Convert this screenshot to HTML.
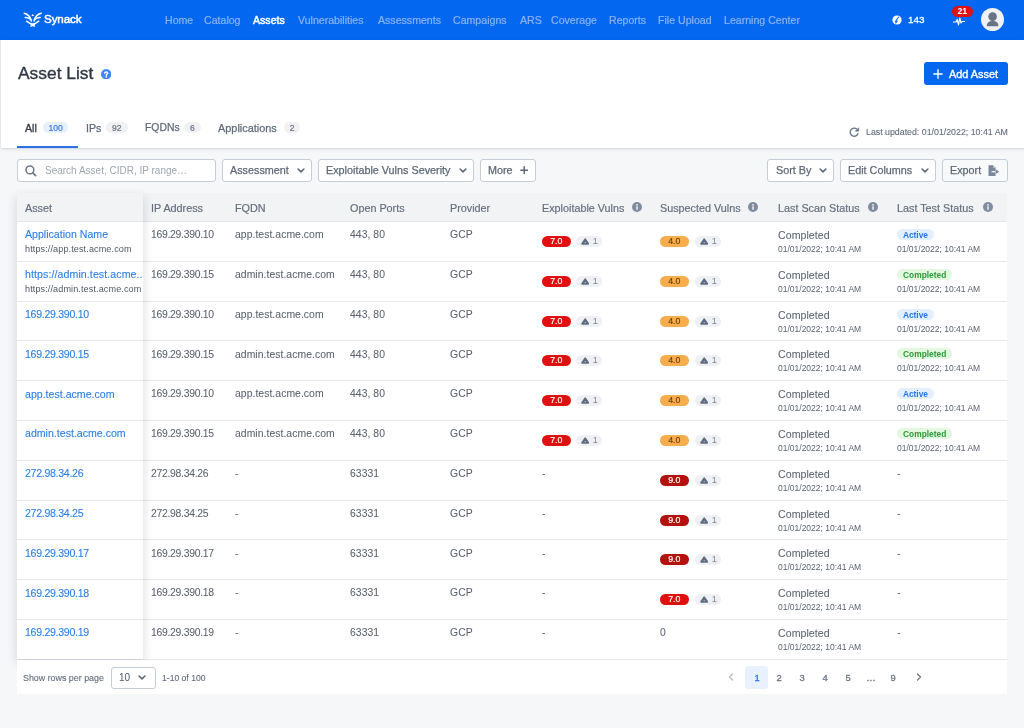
<!DOCTYPE html>
<html><head><meta charset="utf-8"><style>
*{margin:0;padding:0;box-sizing:border-box}
html,body{width:1024px;height:728px;overflow:hidden;background:#f6f7f9;font-family:"Liberation Sans",sans-serif}
.abs{position:absolute}
svg{display:block}
.t{position:absolute;line-height:1;white-space:nowrap;will-change:transform}
.pill,.gpill,.st,.bdg{will-change:transform}
#nav{position:absolute;left:0;top:0;width:1024px;height:40px;background:#0467f0}
.nl{color:#8ab4f7;font-size:10.6px;-webkit-text-stroke:0.2px #8ab4f7}
.nl.on{color:#fff;-webkit-text-stroke:0.45px #fff}
#hdr{position:absolute;left:1px;top:40px;width:1023px;height:109.2px;background:#fff;border-bottom:1px solid #dadde2;box-shadow:0 1px 3px rgba(30,40,60,0.08)}
.pill{position:absolute;height:11.4px;border-radius:6px;font-size:8.8px;line-height:11.8px;text-align:center;-webkit-text-stroke:0.15px currentColor}
.gpill{position:absolute;height:11.4px;width:26px;border-radius:6px;background:#eef0f3;font-size:8.4px;line-height:11.6px;color:#7f8c9e}
.gpill svg{position:absolute;left:4.5px;top:2.3px}
.gpill span{position:absolute;left:17px;top:0;-webkit-text-stroke:0.15px currentColor}
.btn{position:absolute;top:159.3px;height:22.4px;border:1px solid #c6ccd5;border-radius:3px;background:#fff}
.bt{color:#5d6877;font-size:10.8px;-webkit-text-stroke:0.25px #5d6877}
.th{color:#626e7e;font-size:10.8px;-webkit-text-stroke:0.18px #626e7e}
.cell{color:#59626e;font-size:10.4px;letter-spacing:0.05px;-webkit-text-stroke:0.05px #59626e}
.link{color:#2a7de8;font-size:10.6px;-webkit-text-stroke:0.1px #2a7de8}
.sub{color:#4f5865;font-size:9.1px;letter-spacing:0.1px}
.date{color:#5a6270;font-size:8.5px}
.st{position:absolute;height:11px;border-radius:6px;font-size:8.4px;line-height:12.6px;font-weight:700;text-align:center}
.pg{color:#6b7686;font-size:9.4px;-webkit-text-stroke:0.3px currentColor}
.bdg{position:absolute;top:122.4px;height:11px;border-radius:5.5px;background:#f0f1f3;color:#6a7483;font-size:8.6px;line-height:13px;text-align:center;-webkit-text-stroke:0.2px currentColor}
</style></head><body>

<div id="nav">
<svg class="abs" style="left:22px;top:10px" width="22" height="19" viewBox="0 0 22 19">
<g fill="none" stroke="#fff" stroke-linecap="round" stroke-width="1.5">
<path d="M2.2 3.2 Q7.8 4.6 9.4 11"/><path d="M3.2 7.4 Q6.8 7.2 8.7 9.6"/><path d="M4.6 11.2 Q7.5 13.6 10.7 14.3"/>
<path d="M19.2 3.2 Q13.6 4.6 12 11"/><path d="M18.2 7.4 Q14.6 7.2 12.7 9.6"/><path d="M16.8 11.2 Q13.9 13.6 10.7 14.3"/>
</g>
<path d="M10.7 3.9 L12 5.9 L9.4 5.9 Z" fill="#fff"/>
<path d="M7.8 13.6 L10.7 14.6 L13.6 13.6 L12.6 15.4 L13.4 17.1 L10.7 16.2 L8 17.1 L8.8 15.4 Z" fill="#fff"/>
</svg>
<div class="t " style="left:44.00px;top:13.44px;color:#fff;font-size:11.6px;letter-spacing:-0.1px;-webkit-text-stroke:0.5px #fff">Synack</div>
<div class="t nl" style="left:165.40px;top:14.99px;">Home</div>
<div class="t nl" style="left:204.40px;top:14.99px;">Catalog</div>
<div class="t nl on" style="left:253.40px;top:14.99px;">Assets</div>
<div class="t nl" style="left:298.40px;top:14.99px;">Vulnerabilities</div>
<div class="t nl" style="left:377.90px;top:14.99px;">Assessments</div>
<div class="t nl" style="left:453.40px;top:14.99px;">Campaigns</div>
<div class="t nl" style="left:519.90px;top:14.99px;">ARS</div>
<div class="t nl" style="left:551.40px;top:14.99px;">Coverage</div>
<div class="t nl" style="left:609.40px;top:14.99px;">Reports</div>
<div class="t nl" style="left:658.40px;top:14.99px;">File Upload</div>
<div class="t nl" style="left:724.40px;top:14.99px;">Learning Center</div>
<svg class="abs" style="left:891.8px;top:15px" width="10" height="10" viewBox="0 0 10 10"><circle cx="5" cy="5" r="4.6" fill="#fff"/><path d="M6.8 1.8 L3.6 6.2 L5 6.2 L3.4 8.4" fill="none" stroke="#0467f0" stroke-width="1.1"/></svg>
<div class="t " style="left:907.60px;top:15.38px;color:#fff;font-size:9.9px;-webkit-text-stroke:0.3px #fff">143</div>
<svg class="abs" style="left:952.5px;top:16.5px" width="12" height="9" viewBox="0 0 12 9"><path d="M0.5 5 L3 5 L4.2 2.5 L5.5 8 L6.8 1 L8 6 L9 4.5 L11.5 4.5" fill="none" stroke="#fff" stroke-width="1.2" stroke-linejoin="round" stroke-linecap="round"/></svg>
<div class="abs" style="left:952px;top:6px;width:20.8px;height:10.8px;border-radius:5.4px;background:#e0110f;color:#fff;font-size:8.2px;font-weight:700;line-height:11.6px;text-align:center">21</div>
<svg class="abs" style="left:981px;top:8.2px" width="23" height="23" viewBox="0 0 23 23"><circle cx="11.5" cy="11.5" r="11.5" fill="#f0f1f3"/><circle cx="11.6" cy="8.6" r="4.3" fill="#687485"/><path d="M5.8 18.2 C5.8 14.5 7.8 13 11.6 13 C15.4 13 17.4 14.5 17.4 18.2 Z" fill="#687485"/></svg>
</div>
<div id="hdr"></div>
<div class="abs" style="left:0;top:40px;width:1px;height:108px;background:#e3e6ea"></div>
<div class="t " style="left:18.00px;top:64.71px;color:#2f3743;font-size:17.4px;-webkit-text-stroke:0.35px #2f3743">Asset List</div>
<svg class="abs" style="left:100.8px;top:69px" width="10.4" height="10.4" viewBox="0 0 10 10"><circle cx="5" cy="5" r="5" fill="#3e87f3"/><path d="M3.5 4 C3.5 2.5 6.5 2.5 6.5 3.9 C6.5 4.9 5.1 5 5.1 6" fill="none" stroke="#fff" stroke-width="1.35" stroke-linecap="round"/><circle cx="5.1" cy="7.6" r="0.75" fill="#fff"/></svg>
<div class="abs" style="left:924px;top:62.2px;width:83.6px;height:23px;border-radius:3px;background:#0467f0"></div>
<svg class="abs" style="left:933px;top:69.2px" width="10" height="10" viewBox="0 0 10 10"><path d="M5 0.8 V9.2 M0.8 5 H9.2" stroke="#fff" stroke-width="1.4" stroke-linecap="round"/></svg>
<div class="t " style="left:949.40px;top:68.53px;color:#fff;font-size:10.9px;-webkit-text-stroke:0.35px #fff">Add Asset</div>
<div class="t " style="left:25.00px;top:122.99px;color:#333b46;font-size:10.6px;-webkit-text-stroke:0.35px #333b46">All</div>
<div class="bdg" style="left:43.3px;width:25.4px;background:#e6f0fd;color:#3a7be0">100</div>
<div class="t " style="left:86.00px;top:122.99px;color:#5f6b7b;font-size:10.6px;-webkit-text-stroke:0.25px #5f6b7b">IPs</div>
<div class="bdg" style="left:106.4px;width:21.6px">92</div>
<div class="t " style="left:145.30px;top:123.16px;color:#5f6b7b;font-size:10.4px;-webkit-text-stroke:0.25px #5f6b7b">FQDNs</div>
<div class="bdg" style="left:183.8px;width:16.6px">6</div>
<div class="t " style="left:217.60px;top:122.73px;color:#5f6b7b;font-size:10.9px;-webkit-text-stroke:0.25px #5f6b7b">Applications</div>
<div class="bdg" style="left:283.7px;width:16.4px">2</div>
<div class="abs" style="left:17px;top:146px;width:60.5px;height:2.2px;background:#2c72e6"></div>
<svg class="abs" style="left:849px;top:126.6px" width="10.6" height="10.6" viewBox="0 0 10 10"><path d="M8.6 5.9 A3.8 3.8 0 1 1 7.6 2.2" fill="none" stroke="#66738a" stroke-width="1.2"/><path d="M9.2 0.7 V3.9 H6 Z" fill="#66738a" stroke="#66738a" stroke-width="0.5" stroke-linejoin="round"/></svg>
<div class="t " style="left:866.40px;top:127.82px;color:#5f6b7b;font-size:8.8px;-webkit-text-stroke:0.1px #5f6b7b">Last updated: 01/01/2022; 10:41 AM</div>
<div class="btn" style="left:17px;width:199px"></div>
<svg class="abs" style="left:24.8px;top:164.8px" width="12" height="12" viewBox="0 0 12 12"><circle cx="4.9" cy="4.9" r="3.9" fill="none" stroke="#6b778a" stroke-width="1.5"/><path d="M7.8 7.8 L10.6 10.6" stroke="#6b778a" stroke-width="1.7" stroke-linecap="round"/></svg>
<div class="t " style="left:45.20px;top:166.30px;color:#9ea6b1;font-size:10px">Search Asset, CIDR, IP range…</div>
<div class="btn" style="left:222px;width:89.7px;background:#fff"></div>
<div class="t bt" style="left:230.00px;top:165.42px;">Assessment</div>
<div class="abs" style="left:297px;top:168.3px"><svg width="8" height="5" viewBox="0 0 8 5"><path d="M1.1 1 L4 3.9 L6.9 1" fill="none" stroke="#5d6878" stroke-width="1.6" stroke-linecap="round" stroke-linejoin="round"/></svg></div>
<div class="btn" style="left:318px;width:156px;background:#fff"></div>
<div class="t bt" style="left:326.00px;top:165.42px;">Exploitable Vulns Severity</div>
<div class="abs" style="left:459px;top:168.3px"><svg width="8" height="5" viewBox="0 0 8 5"><path d="M1.1 1 L4 3.9 L6.9 1" fill="none" stroke="#5d6878" stroke-width="1.6" stroke-linecap="round" stroke-linejoin="round"/></svg></div>
<div class="btn" style="left:480px;width:55.6px;background:#fff"></div>
<div class="t bt" style="left:487.80px;top:165.42px;">More</div>
<div class="btn" style="left:767.2px;width:66.8px;background:#fff"></div>
<div class="t bt" style="left:775.50px;top:165.42px;">Sort By</div>
<div class="abs" style="left:819px;top:168.3px"><svg width="8" height="5" viewBox="0 0 8 5"><path d="M1.1 1 L4 3.9 L6.9 1" fill="none" stroke="#5d6878" stroke-width="1.6" stroke-linecap="round" stroke-linejoin="round"/></svg></div>
<div class="btn" style="left:840px;width:95.6px;background:#fff"></div>
<div class="t bt" style="left:848.20px;top:165.42px;">Edit Columns</div>
<div class="abs" style="left:921px;top:168.3px"><svg width="8" height="5" viewBox="0 0 8 5"><path d="M1.1 1 L4 3.9 L6.9 1" fill="none" stroke="#5d6878" stroke-width="1.6" stroke-linecap="round" stroke-linejoin="round"/></svg></div>
<div class="btn" style="left:941.5px;width:66px;background:#f8f9fa"></div>
<div class="t bt" style="left:949.50px;top:165.42px;">Export</div>
<svg class="abs" style="left:520px;top:166.3px" width="8.4" height="8.4" viewBox="0 0 8.4 8.4"><path d="M4.2 0.8 V7.6 M0.8 4.2 H7.6" stroke="#5d6878" stroke-width="1.5" stroke-linecap="round"/></svg>
<svg class="abs" style="left:987.5px;top:164.8px" width="12" height="11.5" viewBox="0 0 12 11.5"><path d="M0.5 0.8 Q0.5 0.2 1.1 0.2 L5.2 0.2 L7.6 2.7 L7.6 10.7 Q7.6 11.3 7 11.3 L1.1 11.3 Q0.5 11.3 0.5 10.7 Z" fill="#7b889b"/><path d="M5.2 0.2 L5.2 2.7 L7.6 2.7" fill="#c9d0da"/><rect x="3.6" y="6.1" width="5" height="1.2" fill="#f8f9fa"/><path d="M8 4.6 L11.3 6.7 L8 8.8 Z" fill="#7b889b"/><rect x="7.4" y="6.1" width="1.6" height="1.2" fill="#7b889b"/></svg>
<div class="abs" style="left:17px;top:193px;width:990px;height:501.2px;background:#fff"></div>
<div class="abs" style="left:17px;top:193px;width:990px;height:28.9px;background:#f2f3f5;border-bottom:1px solid #e3e6ea"></div>
<div class="abs" style="left:17px;top:260.70px;width:990px;height:1px;background:#e6e8eb"></div>
<div class="abs" style="left:17px;top:300.50px;width:990px;height:1px;background:#e6e8eb"></div>
<div class="abs" style="left:17px;top:340.30px;width:990px;height:1px;background:#e6e8eb"></div>
<div class="abs" style="left:17px;top:380.10px;width:990px;height:1px;background:#e6e8eb"></div>
<div class="abs" style="left:17px;top:419.90px;width:990px;height:1px;background:#e6e8eb"></div>
<div class="abs" style="left:17px;top:459.70px;width:990px;height:1px;background:#e6e8eb"></div>
<div class="abs" style="left:17px;top:499.50px;width:990px;height:1px;background:#e6e8eb"></div>
<div class="abs" style="left:17px;top:539.30px;width:990px;height:1px;background:#e6e8eb"></div>
<div class="abs" style="left:17px;top:579.10px;width:990px;height:1px;background:#e6e8eb"></div>
<div class="abs" style="left:17px;top:618.90px;width:990px;height:1px;background:#e6e8eb"></div>
<div class="abs" style="left:17px;top:658.70px;width:990px;height:1px;background:#e6e8eb"></div>
<div class="abs" style="left:17px;top:659.00px;width:910px;height:1.4px;background:#e6e9ec"></div>
<div class="abs" style="left:17px;top:193px;width:126px;height:466.2px;box-shadow:0 4px 10px rgba(20,30,50,0.17)"></div>
<div class="abs" style="left:17px;top:659.6px;width:990px;height:34.6px;background:#fff"></div>
<div class="abs" style="left:17px;top:193px;width:126px;height:466.2px;background:#fff"></div>
<div class="abs" style="left:17px;top:193px;width:126px;height:28.9px;background:#f2f3f5;border-bottom:1px solid #e3e6ea"></div>
<div class="abs" style="left:17px;top:260.70px;width:126px;height:1px;background:#e6e8eb"></div>
<div class="abs" style="left:17px;top:300.50px;width:126px;height:1px;background:#e6e8eb"></div>
<div class="abs" style="left:17px;top:340.30px;width:126px;height:1px;background:#e6e8eb"></div>
<div class="abs" style="left:17px;top:380.10px;width:126px;height:1px;background:#e6e8eb"></div>
<div class="abs" style="left:17px;top:419.90px;width:126px;height:1px;background:#e6e8eb"></div>
<div class="abs" style="left:17px;top:459.70px;width:126px;height:1px;background:#e6e8eb"></div>
<div class="abs" style="left:17px;top:499.50px;width:126px;height:1px;background:#e6e8eb"></div>
<div class="abs" style="left:17px;top:539.30px;width:126px;height:1px;background:#e6e8eb"></div>
<div class="abs" style="left:17px;top:579.10px;width:126px;height:1px;background:#e6e8eb"></div>
<div class="abs" style="left:17px;top:618.90px;width:126px;height:1px;background:#e6e8eb"></div>
<div class="t th" style="left:24.90px;top:202.92px;">Asset</div>
<div class="t th" style="left:151.10px;top:202.92px;">IP Address</div>
<div class="t th" style="left:235.10px;top:202.92px;">FQDN</div>
<div class="t th" style="left:349.50px;top:202.92px;">Open Ports</div>
<div class="t th" style="left:449.70px;top:202.92px;">Provider</div>
<div class="t th" style="left:541.50px;top:202.92px;">Exploitable Vulns</div>
<div class="abs" style="left:631.60px;top:202.4px"><svg width="10" height="10" viewBox="0 0 10 10"><circle cx="5" cy="5" r="5" fill="#7f8ca0"/><circle cx="5" cy="2.9" r="0.8" fill="#fff"/><rect x="4.35" y="4.3" width="1.3" height="3.5" rx="0.3" fill="#fff"/></svg></div>
<div class="t th" style="left:659.70px;top:202.92px;">Suspected Vulns</div>
<div class="abs" style="left:748.30px;top:202.4px"><svg width="10" height="10" viewBox="0 0 10 10"><circle cx="5" cy="5" r="5" fill="#7f8ca0"/><circle cx="5" cy="2.9" r="0.8" fill="#fff"/><rect x="4.35" y="4.3" width="1.3" height="3.5" rx="0.3" fill="#fff"/></svg></div>
<div class="t th" style="left:778.10px;top:202.92px;">Last Scan Status</div>
<div class="abs" style="left:868.30px;top:202.4px"><svg width="10" height="10" viewBox="0 0 10 10"><circle cx="5" cy="5" r="5" fill="#7f8ca0"/><circle cx="5" cy="2.9" r="0.8" fill="#fff"/><rect x="4.35" y="4.3" width="1.3" height="3.5" rx="0.3" fill="#fff"/></svg></div>
<div class="t th" style="left:896.80px;top:202.92px;">Last Test Status</div>
<div class="abs" style="left:982.70px;top:202.4px"><svg width="10" height="10" viewBox="0 0 10 10"><circle cx="5" cy="5" r="5" fill="#7f8ca0"/><circle cx="5" cy="2.9" r="0.8" fill="#fff"/><rect x="4.35" y="4.3" width="1.3" height="3.5" rx="0.3" fill="#fff"/></svg></div>
<div class="t link" style="left:24.90px;top:229.49px;">Application Name</div>
<div class="t sub" style="left:25.00px;top:245.06px;">https://app.test.acme.com</div>
<div class="t cell" style="left:151.10px;top:230.16px;letter-spacing:-0.28px">169.29.390.10</div>
<div class="t cell" style="left:235.10px;top:230.16px;">app.test.acme.com</div>
<div class="t cell" style="left:349.50px;top:230.16px;">443, 80</div>
<div class="t cell" style="left:449.70px;top:230.16px;">GCP</div>
<div class="pill" style="left:541.70px;top:236.00px;width:28.6px;background:#e01010;color:#fff">7.0</div><div class="gpill" style="left:576.00px;top:236.00px"><svg width="8.4" height="7" viewBox="0 0 8.4 7"><path d="M4.2 1.2 L7.3 5.8 L1.1 5.8 Z" fill="#5d6b80" stroke="#5d6b80" stroke-width="1.7" stroke-linejoin="round"/><rect x="3.75" y="4.2" width="0.9" height="1" fill="#eef0f3"/></svg><span>1</span></div>
<div class="pill" style="left:660.40px;top:236.00px;width:28.6px;background:#f7ad4c;color:#6b4210">4.0</div><div class="gpill" style="left:694.70px;top:236.00px"><svg width="8.4" height="7" viewBox="0 0 8.4 7"><path d="M4.2 1.2 L7.3 5.8 L1.1 5.8 Z" fill="#5d6b80" stroke="#5d6b80" stroke-width="1.7" stroke-linejoin="round"/><rect x="3.75" y="4.2" width="0.9" height="1" fill="#eef0f3"/></svg><span>1</span></div>
<div class="t cell" style="left:778.10px;top:229.99px;font-size:10.6px">Completed</div>
<div class="t date" style="left:778.30px;top:244.98px;">01/01/2022; 10:41 AM</div>
<div class="st" style="left:897.3px;top:229.00px;width:36.9px;background:#e4effd;color:#2a74e0">Active</div>
<div class="t date" style="left:897.00px;top:244.98px;">01/01/2022; 10:41 AM</div>
<div class="t link" style="left:24.90px;top:269.29px;letter-spacing:0.09px">https://admin.test.acme..</div>
<div class="t sub" style="left:25.00px;top:284.87px;">https://admin.test.acme.com</div>
<div class="t cell" style="left:151.10px;top:269.96px;letter-spacing:-0.28px">169.29.390.15</div>
<div class="t cell" style="left:235.10px;top:269.96px;">admin.test.acme.com</div>
<div class="t cell" style="left:349.50px;top:269.96px;">443, 80</div>
<div class="t cell" style="left:449.70px;top:269.96px;">GCP</div>
<div class="pill" style="left:541.70px;top:275.80px;width:28.6px;background:#e01010;color:#fff">7.0</div><div class="gpill" style="left:576.00px;top:275.80px"><svg width="8.4" height="7" viewBox="0 0 8.4 7"><path d="M4.2 1.2 L7.3 5.8 L1.1 5.8 Z" fill="#5d6b80" stroke="#5d6b80" stroke-width="1.7" stroke-linejoin="round"/><rect x="3.75" y="4.2" width="0.9" height="1" fill="#eef0f3"/></svg><span>1</span></div>
<div class="pill" style="left:660.40px;top:275.80px;width:28.6px;background:#f7ad4c;color:#6b4210">4.0</div><div class="gpill" style="left:694.70px;top:275.80px"><svg width="8.4" height="7" viewBox="0 0 8.4 7"><path d="M4.2 1.2 L7.3 5.8 L1.1 5.8 Z" fill="#5d6b80" stroke="#5d6b80" stroke-width="1.7" stroke-linejoin="round"/><rect x="3.75" y="4.2" width="0.9" height="1" fill="#eef0f3"/></svg><span>1</span></div>
<div class="t cell" style="left:778.10px;top:269.79px;font-size:10.6px">Completed</div>
<div class="t date" style="left:778.30px;top:284.77px;">01/01/2022; 10:41 AM</div>
<div class="st" style="left:897.3px;top:268.80px;width:55.4px;background:#e3f8df;color:#2f9a3c">Completed</div>
<div class="t date" style="left:897.00px;top:284.77px;">01/01/2022; 10:41 AM</div>
<div class="t link" style="left:24.90px;top:309.09px;letter-spacing:-0.3px">169.29.390.10</div>
<div class="t cell" style="left:151.10px;top:309.76px;letter-spacing:-0.28px">169.29.390.10</div>
<div class="t cell" style="left:235.10px;top:309.76px;">app.test.acme.com</div>
<div class="t cell" style="left:349.50px;top:309.76px;">443, 80</div>
<div class="t cell" style="left:449.70px;top:309.76px;">GCP</div>
<div class="pill" style="left:541.70px;top:315.60px;width:28.6px;background:#e01010;color:#fff">7.0</div><div class="gpill" style="left:576.00px;top:315.60px"><svg width="8.4" height="7" viewBox="0 0 8.4 7"><path d="M4.2 1.2 L7.3 5.8 L1.1 5.8 Z" fill="#5d6b80" stroke="#5d6b80" stroke-width="1.7" stroke-linejoin="round"/><rect x="3.75" y="4.2" width="0.9" height="1" fill="#eef0f3"/></svg><span>1</span></div>
<div class="pill" style="left:660.40px;top:315.60px;width:28.6px;background:#f7ad4c;color:#6b4210">4.0</div><div class="gpill" style="left:694.70px;top:315.60px"><svg width="8.4" height="7" viewBox="0 0 8.4 7"><path d="M4.2 1.2 L7.3 5.8 L1.1 5.8 Z" fill="#5d6b80" stroke="#5d6b80" stroke-width="1.7" stroke-linejoin="round"/><rect x="3.75" y="4.2" width="0.9" height="1" fill="#eef0f3"/></svg><span>1</span></div>
<div class="t cell" style="left:778.10px;top:309.59px;font-size:10.6px">Completed</div>
<div class="t date" style="left:778.30px;top:324.57px;">01/01/2022; 10:41 AM</div>
<div class="st" style="left:897.3px;top:308.60px;width:36.9px;background:#e4effd;color:#2a74e0">Active</div>
<div class="t date" style="left:897.00px;top:324.57px;">01/01/2022; 10:41 AM</div>
<div class="t link" style="left:24.90px;top:348.89px;letter-spacing:-0.3px">169.29.390.15</div>
<div class="t cell" style="left:151.10px;top:349.56px;letter-spacing:-0.28px">169.29.390.15</div>
<div class="t cell" style="left:235.10px;top:349.56px;">admin.test.acme.com</div>
<div class="t cell" style="left:349.50px;top:349.56px;">443, 80</div>
<div class="t cell" style="left:449.70px;top:349.56px;">GCP</div>
<div class="pill" style="left:541.70px;top:355.40px;width:28.6px;background:#e01010;color:#fff">7.0</div><div class="gpill" style="left:576.00px;top:355.40px"><svg width="8.4" height="7" viewBox="0 0 8.4 7"><path d="M4.2 1.2 L7.3 5.8 L1.1 5.8 Z" fill="#5d6b80" stroke="#5d6b80" stroke-width="1.7" stroke-linejoin="round"/><rect x="3.75" y="4.2" width="0.9" height="1" fill="#eef0f3"/></svg><span>1</span></div>
<div class="pill" style="left:660.40px;top:355.40px;width:28.6px;background:#f7ad4c;color:#6b4210">4.0</div><div class="gpill" style="left:694.70px;top:355.40px"><svg width="8.4" height="7" viewBox="0 0 8.4 7"><path d="M4.2 1.2 L7.3 5.8 L1.1 5.8 Z" fill="#5d6b80" stroke="#5d6b80" stroke-width="1.7" stroke-linejoin="round"/><rect x="3.75" y="4.2" width="0.9" height="1" fill="#eef0f3"/></svg><span>1</span></div>
<div class="t cell" style="left:778.10px;top:349.39px;font-size:10.6px">Completed</div>
<div class="t date" style="left:778.30px;top:364.38px;">01/01/2022; 10:41 AM</div>
<div class="st" style="left:897.3px;top:348.40px;width:55.4px;background:#e3f8df;color:#2f9a3c">Completed</div>
<div class="t date" style="left:897.00px;top:364.38px;">01/01/2022; 10:41 AM</div>
<div class="t link" style="left:24.90px;top:388.69px;">app.test.acme.com</div>
<div class="t cell" style="left:151.10px;top:389.36px;letter-spacing:-0.28px">169.29.390.10</div>
<div class="t cell" style="left:235.10px;top:389.36px;">app.test.acme.com</div>
<div class="t cell" style="left:349.50px;top:389.36px;">443, 80</div>
<div class="t cell" style="left:449.70px;top:389.36px;">GCP</div>
<div class="pill" style="left:541.70px;top:395.20px;width:28.6px;background:#e01010;color:#fff">7.0</div><div class="gpill" style="left:576.00px;top:395.20px"><svg width="8.4" height="7" viewBox="0 0 8.4 7"><path d="M4.2 1.2 L7.3 5.8 L1.1 5.8 Z" fill="#5d6b80" stroke="#5d6b80" stroke-width="1.7" stroke-linejoin="round"/><rect x="3.75" y="4.2" width="0.9" height="1" fill="#eef0f3"/></svg><span>1</span></div>
<div class="pill" style="left:660.40px;top:395.20px;width:28.6px;background:#f7ad4c;color:#6b4210">4.0</div><div class="gpill" style="left:694.70px;top:395.20px"><svg width="8.4" height="7" viewBox="0 0 8.4 7"><path d="M4.2 1.2 L7.3 5.8 L1.1 5.8 Z" fill="#5d6b80" stroke="#5d6b80" stroke-width="1.7" stroke-linejoin="round"/><rect x="3.75" y="4.2" width="0.9" height="1" fill="#eef0f3"/></svg><span>1</span></div>
<div class="t cell" style="left:778.10px;top:389.19px;font-size:10.6px">Completed</div>
<div class="t date" style="left:778.30px;top:404.18px;">01/01/2022; 10:41 AM</div>
<div class="st" style="left:897.3px;top:388.20px;width:36.9px;background:#e4effd;color:#2a74e0">Active</div>
<div class="t date" style="left:897.00px;top:404.18px;">01/01/2022; 10:41 AM</div>
<div class="t link" style="left:24.90px;top:428.49px;">admin.test.acme.com</div>
<div class="t cell" style="left:151.10px;top:429.16px;letter-spacing:-0.28px">169.29.390.15</div>
<div class="t cell" style="left:235.10px;top:429.16px;">admin.test.acme.com</div>
<div class="t cell" style="left:349.50px;top:429.16px;">443, 80</div>
<div class="t cell" style="left:449.70px;top:429.16px;">GCP</div>
<div class="pill" style="left:541.70px;top:435.00px;width:28.6px;background:#e01010;color:#fff">7.0</div><div class="gpill" style="left:576.00px;top:435.00px"><svg width="8.4" height="7" viewBox="0 0 8.4 7"><path d="M4.2 1.2 L7.3 5.8 L1.1 5.8 Z" fill="#5d6b80" stroke="#5d6b80" stroke-width="1.7" stroke-linejoin="round"/><rect x="3.75" y="4.2" width="0.9" height="1" fill="#eef0f3"/></svg><span>1</span></div>
<div class="pill" style="left:660.40px;top:435.00px;width:28.6px;background:#f7ad4c;color:#6b4210">4.0</div><div class="gpill" style="left:694.70px;top:435.00px"><svg width="8.4" height="7" viewBox="0 0 8.4 7"><path d="M4.2 1.2 L7.3 5.8 L1.1 5.8 Z" fill="#5d6b80" stroke="#5d6b80" stroke-width="1.7" stroke-linejoin="round"/><rect x="3.75" y="4.2" width="0.9" height="1" fill="#eef0f3"/></svg><span>1</span></div>
<div class="t cell" style="left:778.10px;top:428.99px;font-size:10.6px">Completed</div>
<div class="t date" style="left:778.30px;top:443.97px;">01/01/2022; 10:41 AM</div>
<div class="st" style="left:897.3px;top:428.00px;width:55.4px;background:#e3f8df;color:#2f9a3c">Completed</div>
<div class="t date" style="left:897.00px;top:443.97px;">01/01/2022; 10:41 AM</div>
<div class="t link" style="left:24.90px;top:468.29px;letter-spacing:-0.3px">272.98.34.26</div>
<div class="t cell" style="left:151.10px;top:468.96px;letter-spacing:-0.28px">272.98.34.26</div>
<div class="t cell" style="left:235.10px;top:468.96px;">-</div>
<div class="t cell" style="left:349.50px;top:468.96px;">63331</div>
<div class="t cell" style="left:449.70px;top:468.96px;">GCP</div>
<div class="t cell" style="left:541.50px;top:468.96px;">-</div>
<div class="pill" style="left:660.40px;top:474.80px;width:28.6px;background:#b5120f;color:#fff">9.0</div><div class="gpill" style="left:694.70px;top:474.80px"><svg width="8.4" height="7" viewBox="0 0 8.4 7"><path d="M4.2 1.2 L7.3 5.8 L1.1 5.8 Z" fill="#5d6b80" stroke="#5d6b80" stroke-width="1.7" stroke-linejoin="round"/><rect x="3.75" y="4.2" width="0.9" height="1" fill="#eef0f3"/></svg><span>1</span></div>
<div class="t cell" style="left:778.10px;top:468.79px;font-size:10.6px">Completed</div>
<div class="t date" style="left:778.30px;top:483.77px;">01/01/2022; 10:41 AM</div>
<div class="t cell" style="left:896.80px;top:468.96px;">-</div>
<div class="t link" style="left:24.90px;top:508.09px;letter-spacing:-0.3px">272.98.34.25</div>
<div class="t cell" style="left:151.10px;top:508.76px;letter-spacing:-0.28px">272.98.34.25</div>
<div class="t cell" style="left:235.10px;top:508.76px;">-</div>
<div class="t cell" style="left:349.50px;top:508.76px;">63331</div>
<div class="t cell" style="left:449.70px;top:508.76px;">GCP</div>
<div class="t cell" style="left:541.50px;top:508.76px;">-</div>
<div class="pill" style="left:660.40px;top:514.60px;width:28.6px;background:#b5120f;color:#fff">9.0</div><div class="gpill" style="left:694.70px;top:514.60px"><svg width="8.4" height="7" viewBox="0 0 8.4 7"><path d="M4.2 1.2 L7.3 5.8 L1.1 5.8 Z" fill="#5d6b80" stroke="#5d6b80" stroke-width="1.7" stroke-linejoin="round"/><rect x="3.75" y="4.2" width="0.9" height="1" fill="#eef0f3"/></svg><span>1</span></div>
<div class="t cell" style="left:778.10px;top:508.59px;font-size:10.6px">Completed</div>
<div class="t date" style="left:778.30px;top:523.57px;">01/01/2022; 10:41 AM</div>
<div class="t cell" style="left:896.80px;top:508.76px;">-</div>
<div class="t link" style="left:24.90px;top:547.89px;letter-spacing:-0.3px">169.29.390.17</div>
<div class="t cell" style="left:151.10px;top:548.56px;letter-spacing:-0.28px">169.29.390.17</div>
<div class="t cell" style="left:235.10px;top:548.56px;">-</div>
<div class="t cell" style="left:349.50px;top:548.56px;">63331</div>
<div class="t cell" style="left:449.70px;top:548.56px;">GCP</div>
<div class="t cell" style="left:541.50px;top:548.56px;">-</div>
<div class="pill" style="left:660.40px;top:554.40px;width:28.6px;background:#b5120f;color:#fff">9.0</div><div class="gpill" style="left:694.70px;top:554.40px"><svg width="8.4" height="7" viewBox="0 0 8.4 7"><path d="M4.2 1.2 L7.3 5.8 L1.1 5.8 Z" fill="#5d6b80" stroke="#5d6b80" stroke-width="1.7" stroke-linejoin="round"/><rect x="3.75" y="4.2" width="0.9" height="1" fill="#eef0f3"/></svg><span>1</span></div>
<div class="t cell" style="left:778.10px;top:548.39px;font-size:10.6px">Completed</div>
<div class="t date" style="left:778.30px;top:563.37px;">01/01/2022; 10:41 AM</div>
<div class="t cell" style="left:896.80px;top:548.56px;">-</div>
<div class="t link" style="left:24.90px;top:587.69px;letter-spacing:-0.3px">169.29.390.18</div>
<div class="t cell" style="left:151.10px;top:588.36px;letter-spacing:-0.28px">169.29.390.18</div>
<div class="t cell" style="left:235.10px;top:588.36px;">-</div>
<div class="t cell" style="left:349.50px;top:588.36px;">63331</div>
<div class="t cell" style="left:449.70px;top:588.36px;">GCP</div>
<div class="t cell" style="left:541.50px;top:588.36px;">-</div>
<div class="pill" style="left:660.40px;top:594.20px;width:28.6px;background:#e01010;color:#fff">7.0</div><div class="gpill" style="left:694.70px;top:594.20px"><svg width="8.4" height="7" viewBox="0 0 8.4 7"><path d="M4.2 1.2 L7.3 5.8 L1.1 5.8 Z" fill="#5d6b80" stroke="#5d6b80" stroke-width="1.7" stroke-linejoin="round"/><rect x="3.75" y="4.2" width="0.9" height="1" fill="#eef0f3"/></svg><span>1</span></div>
<div class="t cell" style="left:778.10px;top:588.19px;font-size:10.6px">Completed</div>
<div class="t date" style="left:778.30px;top:603.17px;">01/01/2022; 10:41 AM</div>
<div class="t cell" style="left:896.80px;top:588.36px;">-</div>
<div class="t link" style="left:24.90px;top:627.49px;letter-spacing:-0.3px">169.29.390.19</div>
<div class="t cell" style="left:151.10px;top:628.16px;letter-spacing:-0.28px">169.29.390.19</div>
<div class="t cell" style="left:235.10px;top:628.16px;">-</div>
<div class="t cell" style="left:349.50px;top:628.16px;">63331</div>
<div class="t cell" style="left:449.70px;top:628.16px;">GCP</div>
<div class="t cell" style="left:541.50px;top:628.16px;">-</div>
<div class="t cell" style="left:659.70px;top:628.16px;">0</div>
<div class="t cell" style="left:778.10px;top:627.99px;font-size:10.6px">Completed</div>
<div class="t date" style="left:778.30px;top:642.97px;">01/01/2022; 10:41 AM</div>
<div class="t cell" style="left:896.80px;top:628.16px;">-</div>
<div class="t " style="left:22.50px;top:674.03px;color:#5f6b7b;font-size:8.9px;-webkit-text-stroke:0.1px #5f6b7b">Show rows per page</div>
<div class="abs" style="left:110.5px;top:666.5px;width:45.2px;height:22.4px;border:1px solid #c6ccd5;border-radius:3px;background:#fff"></div>
<div class="t " style="left:118.60px;top:673.00px;color:#4f5865;font-size:10px">10</div>
<div class="abs" style="left:137.8px;top:675.3px"><svg width="8" height="5" viewBox="0 0 8 5"><path d="M1.1 1 L4 3.9 L6.9 1" fill="none" stroke="#5d6878" stroke-width="1.6" stroke-linecap="round" stroke-linejoin="round"/></svg></div>
<div class="t " style="left:161.50px;top:674.29px;color:#5f6b7b;font-size:8.6px;-webkit-text-stroke:0.1px #5f6b7b">1-10 of 100</div>
<div class="abs" style="left:745.3px;top:666px;width:22.7px;height:22.5px;border-radius:3px;background:#e8f1fd"></div>
<svg class="abs" style="left:727.5px;top:673px" width="6" height="8" viewBox="0 0 6 8"><path d="M4.5 1 L1.5 4 L4.5 7" fill="none" stroke="#b3bbc6" stroke-width="1.3" stroke-linecap="round" stroke-linejoin="round"/></svg>
<svg class="abs" style="left:915.5px;top:673px" width="6" height="8" viewBox="0 0 6 8"><path d="M1.5 1 L4.5 4 L1.5 7" fill="none" stroke="#6b7686" stroke-width="1.3" stroke-linecap="round" stroke-linejoin="round"/></svg>
<div class="t pg" style="left:746.60px;top:673.01px;width:20px;text-align:center;color:#2a74e0">1</div>
<div class="t pg" style="left:769.40px;top:673.01px;width:20px;text-align:center;color:#6b7686">2</div>
<div class="t pg" style="left:792.20px;top:673.01px;width:20px;text-align:center;color:#6b7686">3</div>
<div class="t pg" style="left:815.00px;top:673.01px;width:20px;text-align:center;color:#6b7686">4</div>
<div class="t pg" style="left:837.80px;top:673.01px;width:20px;text-align:center;color:#6b7686">5</div>
<div class="t pg" style="left:860.60px;top:673.01px;width:20px;text-align:center;color:#6b7686">…</div>
<div class="t pg" style="left:883.40px;top:673.01px;width:20px;text-align:center;color:#6b7686">9</div>
</body></html>
